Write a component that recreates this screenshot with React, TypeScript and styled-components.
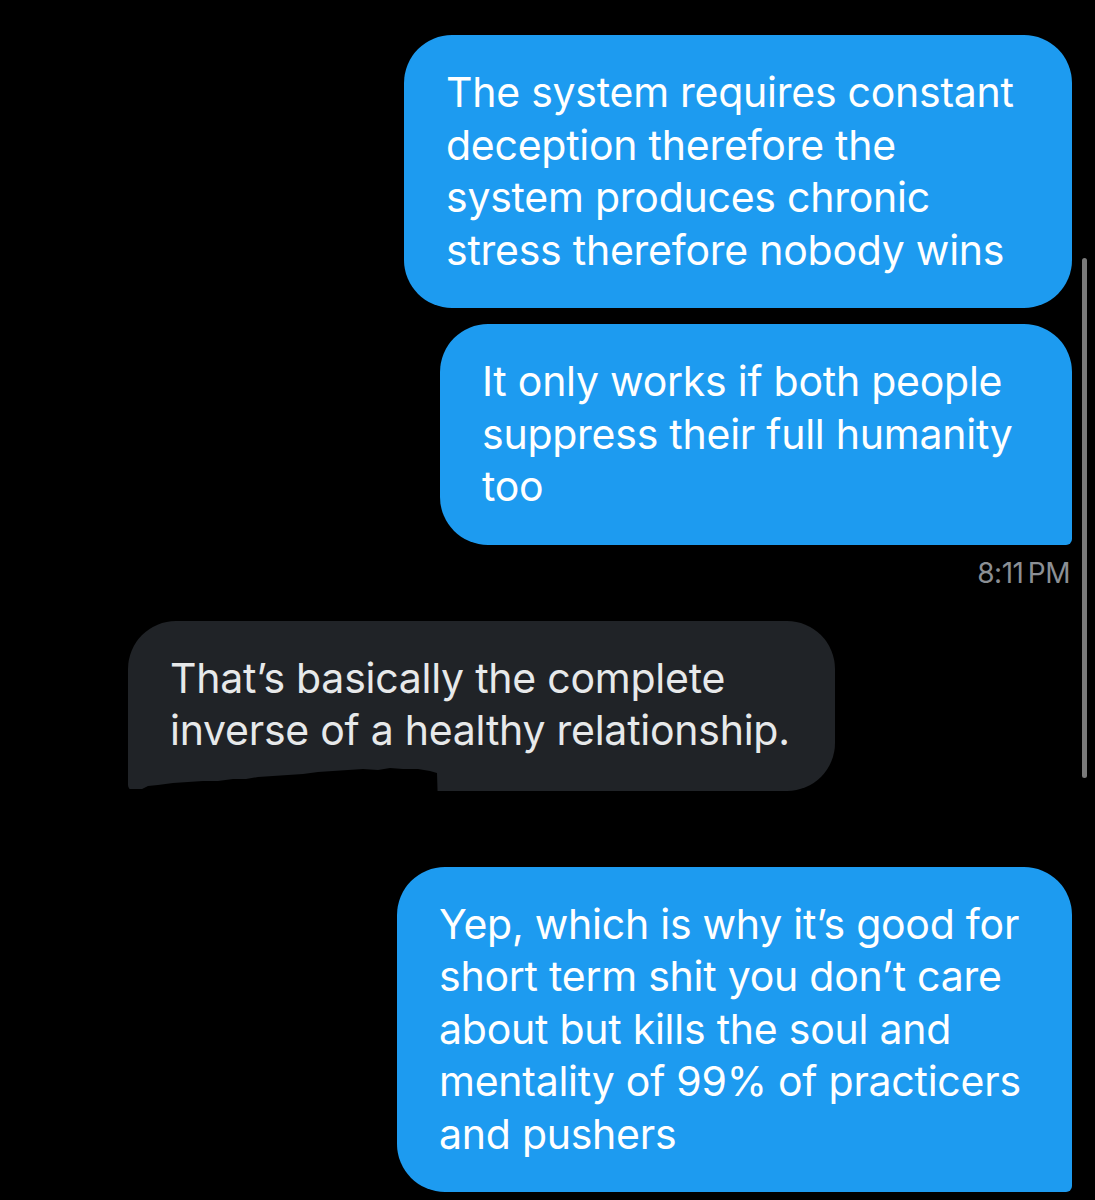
import React from "react";
import styled, { createGlobalStyle } from "styled-components";

const Global = createGlobalStyle`
  html, body { margin: 0; padding: 0; background: #000; }
  body { font-family: Inter, Roboto, sans-serif; -webkit-font-smoothing: antialiased; }
`;

const Screen = styled.div`
  width: 1095px;
  height: 1200px;
  background: #000;
  position: relative;
  overflow: hidden;
  box-sizing: border-box;
  padding: 35px 23px 0 128px;
  display: flex;
  flex-direction: column;
`;

const Row = styled.div<{ $out?: boolean; $mt?: number }>`
  position: relative;
  display: flex;
  justify-content: ${(p) => (p.$out ? "flex-end" : "flex-start")};
  margin-top: ${(p) => p.$mt ?? 0}px;
`;

const Bubble = styled.div<{ $out?: boolean; $w: number; $tail?: boolean }>`
  box-sizing: border-box;
  width: ${(p) => p.$w}px;
  padding: 31px 8px ${(p) => (p.$out ? 32 : 34)}px 42px;
  background: ${(p) => (p.$out ? "#1d9bf0" : "#202327")};
  color: ${(p) => (p.$out ? "#ffffff" : "#e7e9ea")};
  font-size: 41px;
  line-height: 52.5px;
  white-space: pre-line;
  letter-spacing: -0.25px;
  border-radius: ${(p) =>
    p.$tail ? (p.$out ? "48px 48px 6px 48px" : "48px 48px 48px 6px") : "48px"};
`;

const Time = styled.div`
  margin-top: 13px;
  text-align: right;
  color: #8b8f94;
  font-size: 28px;
  line-height: 30px;
  letter-spacing: -0.5px;
  word-spacing: -3px;
  padding-right: 2px;
`;

const Redaction = styled.svg`
  position: absolute;
  left: 0;
  bottom: -15px;
  width: 312px;
  height: 40px;
`;

const Scrollbar = styled.div`
  position: absolute;
  right: 8px;
  top: 258px;
  width: 5px;
  height: 520px;
  border-radius: 3px;
  background: #7a7a7a;
`;

export default function App() {
  return (
    <>
      <Global />
      <Screen>
        <Row $out>
          <Bubble $out $w={668}>
            {"The system requires constant\ndeception therefore the\nsystem produces chronic\nstress therefore nobody wins"}
          </Bubble>
        </Row>
        <Row $out $mt={16}>
          <Bubble $out $tail $w={632}>
            {"It only works if both people\nsuppress their full humanity\ntoo"}
          </Bubble>
        </Row>
        <Time>8:11 PM</Time>
        <Row $mt={33}>
          <Bubble $tail $w={707}>
            {"That’s basically the complete\ninverse of a healthy relationship."}
          </Bubble>
          <Redaction viewBox="0 0 312 40">
            <path
              d="M0 23 L14 23 L20 20 L30 19 L45 17 L60 16 L75 15 L90 15 L105 13 L118 13 L130 11 L145 10 L160 9 L175 8 L190 6 L205 5 L220 4 L235 3 L250 4 L262 2 L275 3 L290 3 L302 5 L309 7 L310 40 L0 40 Z"
              fill="#000"
            />
          </Redaction>
        </Row>
        <Row $out $mt={76}>
          <Bubble $out $tail $w={675}>
            {"Yep, which is why it’s good for\nshort term shit you don’t care\nabout but kills the soul and\nmentality of 99% of practicers\nand pushers"}
          </Bubble>
        </Row>
        <Scrollbar />
      </Screen>
    </>
  );
}
